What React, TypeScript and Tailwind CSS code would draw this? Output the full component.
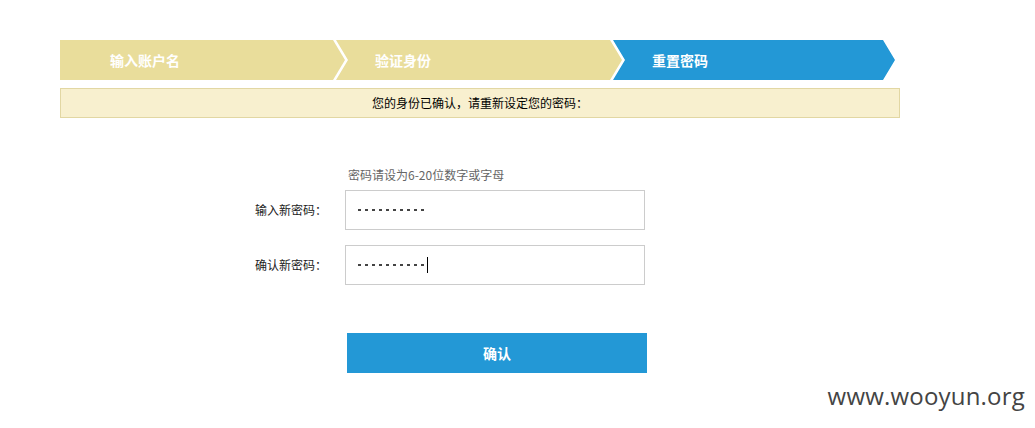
import React from "react";

const cjk = "font-['SimSun','Noto_Sans_CJK_SC',sans-serif]";

const steps = [
  { text: "输入账户名", active: false, first: true },
  { text: "验证身份", active: false, first: false },
  { text: "重置密码", active: true, first: false },
];

const Dots = ({ caret }: { caret?: boolean }) => (
  <div className="flex items-center gap-[4px]">
    {Array.from({ length: 10 }).map((_, i) => (
      <span key={i} className="block w-[3px] h-[2px] bg-[#444]"></span>
    ))}
    {caret && <span className="block w-px h-[16px] bg-black -ml-[1px]"></span>}
  </div>
);

const Field = ({ label, caret }: { label: string; caret?: boolean }) => (
  <div className="flex items-center">
    <label className="w-[345px] text-right pr-[18px] text-[12px] text-[#222]">
      {label}
    </label>
    <div className="w-[300px] h-[40px] border border-[#cccccc] flex items-center pl-[12px] bg-white">
      <Dots caret={caret} />
    </div>
  </div>
);

const App = () => {
  return (
    <div className={`relative w-[1035px] h-[428px] bg-white overflow-hidden ${cjk}`}>
      <div className="pt-[40px] pl-[60px]">
        {/* step bar */}
        <div className="flex h-[40px]">
          {steps.map((s, i) => (
            <div
              key={i}
              className={`${
                i === 0 ? "w-[285px]" : i === 1 ? "w-[286px] -ml-[9px]" : "w-[282px] -ml-[9px]"
              } h-[40px] flex items-center ${
                s.active ? "bg-[#2398d6]" : "bg-[#e9dd9b]"
              } ${s.first ? "pl-[50px]" : "pl-[39px]"}`}
              style={{
                clipPath: s.first
                  ? "polygon(0 0, calc(100% - 12px) 0, 100% 50%, calc(100% - 12px) 100%, 0 100%)"
                  : "polygon(0 0, calc(100% - 12px) 0, 100% 50%, calc(100% - 12px) 100%, 0 100%, 12px 50%)",
              }}
            >
              <span className="text-white text-[14px] font-bold">{s.text}</span>
            </div>
          ))}
        </div>
        {/* notice */}
        <div className="mt-[8px] w-[840px] h-[30px] border border-[#e2d7a3] bg-[#f8f0cf] flex items-center justify-center text-[12px] text-black">
          您的身份已确认，请重新设定您的密码：
        </div>
      </div>

      {/* form */}
      <div className="mt-[49px]">
        <div className="pl-[348px] text-[12px] text-[#666] leading-[16px]">
          密码请设为6-20位数字或字母
        </div>
        <div className="mt-[7px] flex flex-col gap-[15px]">
          <Field label="输入新密码：" />
          <Field label="确认新密码：" caret />
        </div>
        <div className="mt-[48px] pl-[347px]">
          <button className="w-[300px] h-[40px] bg-[#2398d6] text-white text-[14px] font-bold">
            确认
          </button>
        </div>
      </div>

      <div className="absolute right-[10px] bottom-[14px] text-[24px] text-[#444] font-['Open_Sans',sans-serif] tracking-[0.2px]">
        www.wooyun.org
      </div>
    </div>
  );
};

export default App;
